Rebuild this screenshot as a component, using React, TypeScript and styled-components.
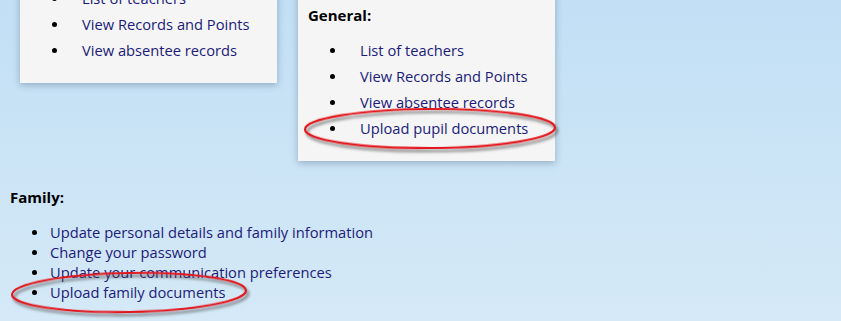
import React, { FC } from 'react';
import styled, { createGlobalStyle } from 'styled-components';

const GlobalStyle = createGlobalStyle`
    html, body {
        margin: 0;
        padding: 0;
        height: 100%;
    }
    body {
        background: linear-gradient(180deg, #c2dff5 0%, #cde5f6 60%, #d5e9f7 100%);
        font-family: "Open Sans", "Liberation Sans", sans-serif;
        overflow: hidden;
    }
`;

const Page = styled.div`
    padding: 0 10px;
    width: 841px;
    height: 321px;
    box-sizing: border-box;
`;

const CardRow = styled.div`
    display: flex;
    align-items: flex-start;
    gap: 21px;
    margin: -6px 0 0 10px;
`;

const Card = styled.div<{ $lift?: number }>`
    width: 257px;
    box-sizing: border-box;
    padding: 10px 10px 20px 10px;
    margin-top: ${props => (props.$lift ? -props.$lift : 0)}px;
    background-color: #f5f5f5;
    box-shadow: 0 2px 7px rgba(40, 70, 100, 0.35);
`;

const Heading = styled.div<{ $gap: number }>`
    font-size: 15px;
    line-height: 22px;
    font-weight: 700;
    color: #000;
    margin-bottom: ${props => props.$gap}px;
`;

const List = styled.ul`
    list-style: none;
    margin: 0;
    padding: 0;
`;

const Item = styled.li<{ $line: number; $after: number }>`
    position: relative;
    display: flex;
    align-items: center;
    font-size: 14.7px;
    line-height: ${props => props.$line}px;
    color: #201b7a;
    white-space: nowrap;

    &::before {
        content: '';
        flex: none;
        width: 5px;
        height: 5px;
        border-radius: 50%;
        background: #000;
        margin-left: 22px;
        margin-right: ${props => props.$after}px;
    }
`;

const Family = styled.section`
    margin-top: 25px;
`;

const Ring = styled.svg<{ $left: number; $top: number }>`
    position: absolute;
    left: ${props => props.$left}px;
    top: ${props => props.$top}px;
    overflow: visible;
    pointer-events: none;
`;

const Circled: FC<{ w: number; h: number; left: number; top: number; tilt?: number }> = ({ w, h, left, top, tilt = 0 }) => (
    <Ring $left={left} $top={top} width={w} height={h} viewBox={`0 0 ${w} ${h}`}>
        <defs>
            <filter id={`sh${left}${top}`} x="-10%" y="-30%" width="120%" height="170%">
                <feDropShadow dx="2" dy="3" stdDeviation="1.4" floodColor="#4a4a4a" floodOpacity="0.75" />
            </filter>
        </defs>
        <ellipse
            cx={w / 2}
            cy={h / 2}
            rx={w / 2 - 2}
            ry={h / 2 - 2}
            fill="none"
            stroke="#e3141b"
            strokeWidth="2.2"
            transform={`rotate(${tilt} ${w / 2} ${h / 2})`}
            filter={`url(#sh${left}${top})`}
        />
    </Ring>
);

const App: FC = () => {
    return (
        <Page>
            <GlobalStyle />
            <CardRow>
                <Card $lift={19}>
                    <List>
                        <Item $line={26} $after={25}>List of teachers</Item>
                        <Item $line={26} $after={25}>View Records and Points</Item>
                        <Item $line={26} $after={25}>View absentee records</Item>
                    </List>
                </Card>
                <Card>
                    <Heading $gap={11}>General:</Heading>
                    <List>
                        <Item $line={26} $after={25}>List of teachers</Item>
                        <Item $line={26} $after={25}>View Records and Points</Item>
                        <Item $line={26} $after={25}>View absentee records</Item>
                        <Item $line={26} $after={25}>
                            Upload pupil documents
                            <Circled w={254} h={43} left={-5} top={-8} tilt={-0.4} />
                        </Item>
                    </List>
                </Card>
            </CardRow>
            <Family>
                <Heading $gap={14}>Family:</Heading>
                <List>
                    <Item $line={20} $after={13}>Update personal details and family information</Item>
                    <Item $line={20} $after={13}>Change your password</Item>
                    <Item $line={20} $after={13}>Update your communication preferences</Item>
                    <Item $line={20} $after={13}>
                        Upload family documents
                        <Circled w={238} h={43} left={0} top={-11} tilt={-1} />
                    </Item>
                </List>
            </Family>
        </Page>
    );
};

export default App;
